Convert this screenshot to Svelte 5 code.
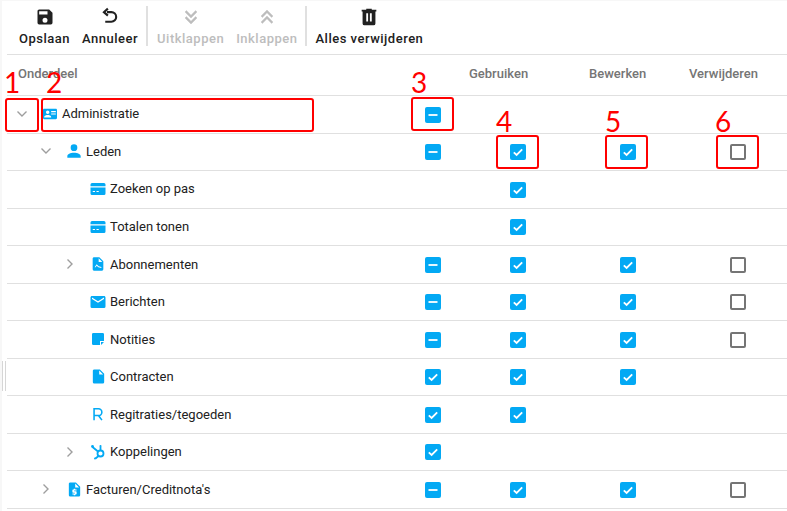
<script>
	const mdi = {
		save: 'M15,9H5V5H15M12,19A3,3 0 0,1 9,16A3,3 0 0,1 12,13A3,3 0 0,1 15,16A3,3 0 0,1 12,19M17,3H5C3.89,3 3,3.9 3,5V19A2,2 0 0,0 5,21H19A2,2 0 0,0 21,19V7L17,3Z',
		down: 'M16.59,5.59L18,7L12,13L6,7L7.41,5.59L12,10.17L16.59,5.59M16.59,11.59L18,13L12,19L6,13L7.41,11.59L12,16.17L16.59,11.59Z',
		up: 'M7.41,18.41L6,17L12,11L18,17L16.59,18.41L12,13.83L7.41,18.41M7.41,12.41L6,11L12,5L18,11L16.59,12.41L12,7.83L7.41,12.41Z',
		trash: 'M9,3V4H4V6H5V19A2,2 0 0,0 7,21H17A2,2 0 0,0 19,19V6H20V4H15V3H9M9,8H11V17H9V8M13,8H15V17H13V8Z',
		admin: 'M2,3H22C23.05,3 24,3.95 24,5V19C24,20.05 23.05,21 22,21H2C0.95,21 0,20.05 0,19V5C0,3.95 0.95,3 2,3M14,7V9H22V7H14M14,11V13H22V11H14M8,13.91C6,13.91 2,15 2,17V18H14V17C14,15 10,13.91 8,13.91M8,6A3,3 0 0,0 5,9A3,3 0 0,0 8,12A3,3 0 0,0 11,9A3,3 0 0,0 8,6Z',
		user: 'M12,4A4,4 0 0,1 16,8A4,4 0 0,1 12,12A4,4 0 0,1 8,8A4,4 0 0,1 12,4M12,14C16.42,14 20,15.79 20,18V20H4V18C4,15.79 7.58,14 12,14Z',
		card: 'M2,8.400V6A2,2 0 0,1 4,4H20A2,2 0 0,1 22,6V8.400H2M2,10H22V18A2,2 0 0,1 20,20H4A2,2 0 0,1 2,18V10M5,14.500V16H8V14.500H5M10,14.500V16H13V14.500H10Z',
		sub: 'M6,2C4.89,2 4,2.89 4,4V20A2,2 0 0,0 6,22H18A2,2 0 0,0 20,20V8L14,2H6M13,3.500L18.500,9H13V3.500M7,17L10,12.500L13,15.500L17,16.500V18L12.500,17L10,14.800L8.500,17H7Z',
		mail: 'M20,8L12,13L4,8V6L12,11L20,6M20,4H4C2.89,4 2,4.89 2,6V18A2,2 0 0,0 4,20H20A2,2 0 0,0 22,18V6C22,4.89 21.1,4 20,4Z',
		note: 'M5,3H19A2,2 0 0,1 21,5V15H15V21H5A2,2 0 0,1 3,19V5A2,2 0 0,1 5,3M21,16.500L16.500,21V16.500H21Z',
		file: 'M13,9V3.500L18.500,9M6,2C4.89,2 4,2.89 4,4V20A2,2 0 0,0 6,22H18A2,2 0 0,0 20,20V8L14,2H6Z',
		invoice: 'M6,2C4.89,2 4,2.89 4,4V20A2,2 0 0,0 6,22H18A2,2 0 0,0 20,20V8L14,2H6M13,3.500L18.500,9H13V3.500M11,11H13V12H15V13.500H11.500V14.500H14A1,1 0 0,1 15,15.500V18A1,1 0 0,1 14,19H13V20H11V19H9V17.500H12.500V16.500H10A1,1 0 0,1 9,15.500V13A1,1 0 0,1 10,12H11V11Z'
	};

	const iconSize = { admin: 14, user: 20, card: 18, sub: 16, mail: 18, note: 16, file: 17, invoice: 17 };

	const tools = [
		{ label: 'Opslaan', icon: 'save', size: 20 },
		{ label: 'Annuleer', icon: 'undo', size: 21, sep: 'first' },
		{ label: 'Uitklappen', icon: 'down', size: 24, off: true },
		{ label: 'Inklappen', icon: 'up', size: 24, off: true, sep: 'last' },
		{ label: 'Alles verwijderen', icon: 'trash', size: 22 }
	];

	// a = mixed, y = checked, n = empty, - = no checkbox
	const rows = [
		{ depth: 0, open: 'down', icon: 'admin', name: 'Administratie', cells: 'a---' },
		{ depth: 1, open: 'down', icon: 'user', name: 'Leden', cells: 'ayyn' },
		{ depth: 2, icon: 'card', name: 'Zoeken op pas', cells: '-y--' },
		{ depth: 2, icon: 'card', name: 'Totalen tonen', cells: '-y--' },
		{ depth: 2, open: 'right', icon: 'sub', name: 'Abonnementen', cells: 'ayyn' },
		{ depth: 2, icon: 'mail', name: 'Berichten', cells: 'ayyn' },
		{ depth: 2, icon: 'note', name: 'Notities', cells: 'ayyn' },
		{ depth: 2, icon: 'file', name: 'Contracten', cells: 'yyy-' },
		{ depth: 2, icon: 'reg', name: 'Regitraties/tegoeden', cells: 'yy--' },
		{ depth: 2, open: 'right', icon: 'hub', name: 'Koppelingen', cells: 'y---' },
		{ depth: 1, open: 'right', icon: 'invoice', name: "Facturen/Creditnota's", cells: 'ayyn' }
	];

	const boxes = [
		{ x: 5, y: 98, w: 34, h: 34 },
		{ x: 41, y: 98, w: 273, h: 34 },
		{ x: 411, y: 97, w: 43, h: 34 },
		{ x: 496, y: 135, w: 43, h: 34 },
		{ x: 605, y: 135, w: 43, h: 34 },
		{ x: 716, y: 135, w: 43, h: 34 }
	];

	const marks = [
		{ n: 1, x: 12, y: 82 },
		{ n: 2, x: 54, y: 82 },
		{ n: 3, x: 419, y: 82 },
		{ n: 4, x: 504, y: 121 },
		{ n: 5, x: 613, y: 121 },
		{ n: 6, x: 723, y: 121 }
	];
</script>

<div class="page">
	<div class="toolbar">
		{#each tools as tool}
			<button class="tool" class:off={tool.off}>
				<span class="tool-icon">
					{#if tool.icon === 'undo'}
						<svg class="undo" viewBox="0 0 24 24" width={tool.size} height={tool.size}><path d="M8 7h5a5.500 5.500 0 0 1 0 11H6M9 3 4.500 7 9 11" /></svg>
					{:else}
						<svg viewBox="0 0 24 24" width={tool.size} height={tool.size}><path d={mdi[tool.icon]} /></svg>
					{/if}
				</span>
				<span>{tool.label}</span>
			</button>
			{#if tool.sep}
				<div class="sep {tool.sep}"></div>
			{/if}
		{/each}
	</div>

	<div class="head">
		<div>Onderdeel</div>
		<div>Gebruiken</div>
		<div>Bewerken</div>
		<div>Verwijderen</div>
	</div>

	{#each rows as row}
		<div class="row">
			<div class="name" style="padding-left: {row.depth * 24}px">
				<span class="chev">
					{#if row.open === 'down'}
						<svg viewBox="0 0 12 8" width="12" height="8"><path d="M1.500 1.500 6 6l4.500-4.500" /></svg>
					{:else if row.open === 'right'}
						<svg viewBox="0 0 8 12" width="8" height="12"><path d="M1.500 1.500 6 6l-4.500 4.500" /></svg>
					{/if}
				</span>
				<span class="icon">
					{#if row.icon === 'reg'}
						<svg viewBox="0 0 16 16" width="14" height="14" class="line"><path d="M3.500 15V2h5a3.800 3.800 0 0 1 0 7.800h-5M8.500 9.800l4 5.200" /></svg>
					{:else if row.icon === 'hub'}
						<svg viewBox="0 0 16 16" width="16" height="16" class="line">
							<circle cx="10.500" cy="9.500" r="3" />
							<path d="M2.500 3 8 7.500M10.500 6.500V2.500M8.500 12 5.500 14.500" />
							<circle class="dot" cx="2.500" cy="2.500" r="1.400" />
							<circle class="dot" cx="10.500" cy="2" r="1" />
							<circle class="dot" cx="5" cy="14.500" r="1" />
						</svg>
					{:else}
						<svg viewBox="0 0 24 24" width={iconSize[row.icon]} height={iconSize[row.icon]}><path fill-rule="evenodd" d={mdi[row.icon]} /></svg>
					{/if}
				</span>
				<span class="label">{row.name}</span>
			</div>
			{#each row.cells.split('') as cell}
				<div class="cell">
					{#if cell === 'a'}
						<span class="box on"><svg viewBox="0 0 16 16" width="16" height="16"><path d="M3.500 8h9" /></svg></span>
					{:else if cell === 'y'}
						<span class="box on"><svg viewBox="0 0 16 16" width="16" height="16"><path d="M3.800 8.300 6.600 11 12.200 5.300" /></svg></span>
					{:else if cell === 'n'}
						<span class="box"></span>
					{/if}
				</div>
			{/each}
		</div>
	{/each}

	<div class="grip"></div>

	{#each boxes as b}
		<div class="mark-box" style="left: {b.x}px; top: {b.y}px; width: {b.w}px; height: {b.h}px"></div>
	{/each}
	{#each marks as m}
		<div class="mark-num" style="left: {m.x}px; top: {m.y}px">{m.n}</div>
	{/each}
</div>

<style>
	:global(body) {
		background: #fff;
		margin: 0;
	}

	.page {
		border-left: 2px solid #f7f7f7;
		border-top: 1px solid #f7f7f7;
		box-sizing: border-box;
		color: #212121;
		font-family: Roboto, sans-serif;
		font-size: 13px;
		height: 511px;
		overflow: hidden;
		padding-left: 5px;
		position: relative;
		width: 787px;
	}

	.toolbar {
		align-items: center;
		border-bottom: 1px solid #e0e0e0;
		box-sizing: border-box;
		display: flex;
		height: 54px;
		padding: 0 0 3px 12px;
	}

	.tool {
		align-items: center;
		background: none;
		border: 0;
		color: #212121;
		display: flex;
		flex-direction: column;
		font: 500 13px Roboto, sans-serif;
		gap: 4px;
		letter-spacing: 0.5px;
		margin-right: 12px;
		padding: 0;
		white-space: nowrap;
	}

	.tool-icon {
		align-items: center;
		display: flex;
		height: 20px;
		justify-content: center;
	}

	.tool svg {
		fill: #212121;
		flex: none;
	}

	.tool svg.undo {
		fill: none;
		stroke: #212121;
		stroke-width: 2.400;
	}

	.tool.off {
		color: #bdbdbd;
	}

	.tool.off svg {
		fill: #bdbdbd;
		stroke: #bdbdbd;
		stroke-width: 0.400;
	}

	.sep {
		background: #e0e0e0;
		height: 40px;
		width: 2px;
	}

	.sep.first {
		margin: 0 9px 0 -4px;
	}

	.sep.last {
		margin: 0 8px 0 -4px;
	}

	.head {
		align-items: center;
		border-bottom: 1px solid #e0e0e0;
		box-sizing: border-box;
		color: #757575;
		display: grid;
		font-weight: 500;
		grid-template-columns: 451px 120px 100px 80px;
		height: 41px;
		padding: 0 0 3px 11px;
		white-space: nowrap;
	}

	.row {
		align-items: center;
		border-bottom: 1px solid #e0e0e0;
		box-sizing: border-box;
		display: grid;
		grid-template-columns: 383px 86px 84px 136px 84px;
		height: 37.55px;
	}

	.name {
		align-items: center;
		display: flex;
		padding-bottom: 0.8px;
	}

	.chev {
		display: flex;
		justify-content: center;
		margin-left: 3px;
		width: 24px;
	}

	.chev svg {
		fill: none;
		stroke: #9e9e9e;
		stroke-width: 1.400;
	}

	.icon {
		align-items: center;
		display: flex;
		justify-content: center;
		margin-left: 8px;
		width: 16px;
	}

	.icon svg {
		fill: #03a9f4;
		flex: none;
	}

	.icon svg.line {
		fill: none;
		stroke: #03a9f4;
		stroke-width: 1.800;
	}

	.icon svg.line .dot {
		fill: #03a9f4;
		stroke: none;
	}

	.label {
		margin-left: 4px;
		white-space: nowrap;
	}

	.cell {
		align-items: center;
		display: flex;
		justify-content: center;
		padding-top: 0.5px;
	}

	.box {
		border: 2px solid #757575;
		border-radius: 2px;
		box-sizing: border-box;
		display: block;
		height: 16px;
		width: 16px;
	}

	.box.on {
		background: #03a9f4;
		border: 0;
	}

	.box svg {
		display: block;
		fill: none;
		stroke: #fff;
		stroke-width: 1.800;
	}

	.grip {
		border-left: 1px solid #d6d6d6;
		border-right: 1px solid #d6d6d6;
		height: 30px;
		left: 0;
		position: absolute;
		top: 360px;
		width: 2px;
	}

	.mark-box {
		border: 2px solid #f00;
		border-radius: 3px;
		box-sizing: border-box;
		position: absolute;
		transform: translate(-2px, -1px);
	}

	.mark-num {
		color: #f00;
		font: 28px/1 Lato, sans-serif;
		position: absolute;
		transform: translate(calc(-50% - 2px), calc(-50% - 1px));
	}
</style>
